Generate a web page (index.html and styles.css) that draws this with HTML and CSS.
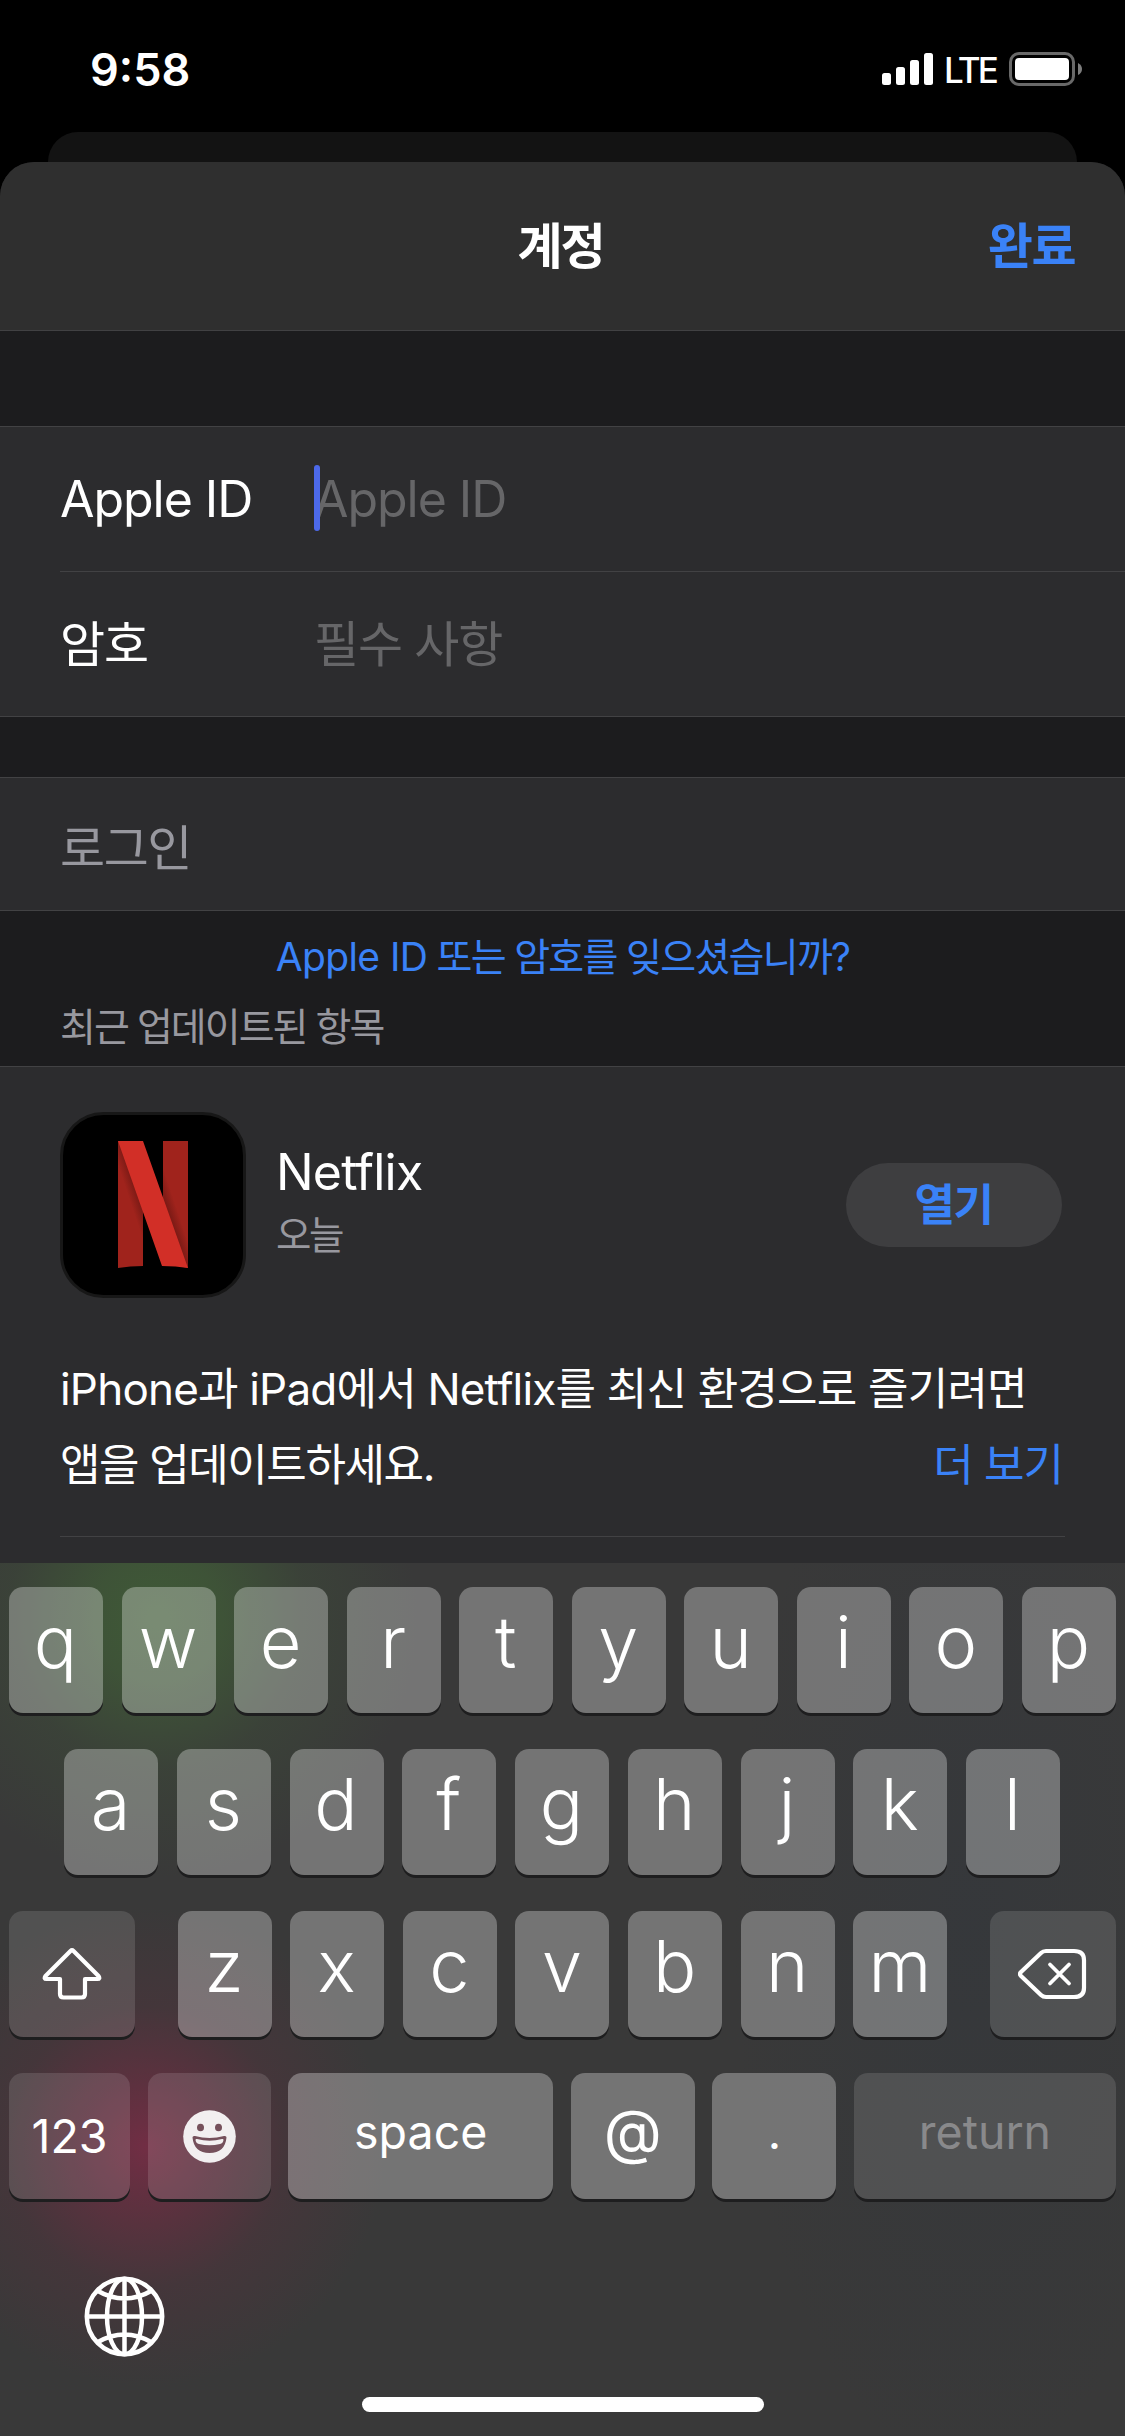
FILE: index.html
```html
<!DOCTYPE html>
<html lang="ko">
<head>
<meta charset="utf-8">
<title>계정</title>
<link rel="stylesheet" href="styles.css">
</head>
<body>
<div class="screen">
  <header class="status">
    <span class="clock">9:58</span>
    <div class="indicators">
      <svg class="signal" width="51" height="32" viewBox="0 0 51 32" fill="#fff"><rect x="0" y="20" width="9" height="12" rx="2.5"/><rect x="14" y="14" width="9" height="18" rx="2.5"/><rect x="28" y="7" width="9" height="25" rx="2.5"/><rect x="42" y="0" width="9" height="32" rx="2.5"/></svg>
      <span class="lte">LTE</span>
      <svg class="battery" width="73" height="34" viewBox="0 0 73 34"><rect x="1.5" y="1.5" width="63" height="31" rx="8.5" fill="none" stroke="#696969" stroke-width="3"/><rect x="6" y="6" width="54" height="22" rx="4" fill="#fff"/><path d="M69 11q4 2 4 6t-4 6z" fill="#7d7d7d"/></svg>
    </div>
  </header>
  <div class="back-card"></div>
  <main class="sheet">
    <div class="nav"><h1 class="title">계정</h1><span class="done">완료</span></div>
    <section class="group credentials">
      <div class="row first"><span class="label">Apple ID</span><span class="field focused">Apple ID</span></div>
      <div class="row ko"><span class="label">암호</span><span class="field">필수 사항</span></div>
    </section>
    <section class="group login">로그인</section>
    <div class="between">
      <a class="forgot"><span class="latin">Apple ID</span> 또는 암호를 잊으셨습니까?</a>
      <h2 class="recent">최근 업데이트된 항목</h2>
    </div>
    <section class="updates">
      <div class="app">
        <svg class="app-icon" width="186" height="186" viewBox="0 0 186 186">
          <defs>
            <linearGradient id="foldLeft" gradientUnits="userSpaceOnUse" x1="77" y1="80" x2="68" y2="83"><stop offset="0" stop-color="#7a1a15"/><stop offset="1" stop-color="#a0231c"/></linearGradient>
            <linearGradient id="foldRight" gradientUnits="userSpaceOnUse" x1="109" y1="103" x2="118" y2="100"><stop offset="0" stop-color="#7a1a15"/><stop offset="1" stop-color="#a0231c"/></linearGradient>
          </defs>
          <rect x="1.5" y="1.5" width="183" height="183" rx="42" fill="#000" stroke="#171717" stroke-width="3"/>
          <path d="M58 29h25v125q-13 0-25 2z" fill="url(#foldLeft)"/>
          <path d="M103 29h25v127l-25-5z" fill="url(#foldRight)"/>
          <path d="M58 29h25l45 127q-12-2-26-2z" fill="#d22f27"/>
        </svg>
        <div class="app-text"><span class="app-name">Netflix</span><span class="app-date">오늘</span></div>
        <span class="open">열기</span>
      </div>
      <div class="notes">
        <p class="line">iPhone과 iPad에서 Netflix를 최신 환경으로 즐기려면</p>
        <div class="second"><p>앱을 업데이트하세요.</p><span class="more">더 보기</span></div>
      </div>
    </section>
  </main>
  <section class="keyboard">
    <div class="keys"><span class="key">q</span><span class="key">w</span><span class="key">e</span><span class="key">r</span><span class="key">t</span><span class="key">y</span><span class="key">u</span><span class="key">i</span><span class="key">o</span><span class="key">p</span></div>
    <div class="keys middle"><span class="key">a</span><span class="key">s</span><span class="key">d</span><span class="key">f</span><span class="key">g</span><span class="key">h</span><span class="key">j</span><span class="key">k</span><span class="key">l</span></div>
    <div class="keys">
      <span class="key dark wide"><svg width="60" height="54" viewBox="0 0 60 54"><path d="M28.500 4Q30 2.500 31.500 4L56.500 29q2 3-1 3H43v15q0 3.500-3.500 3.500h-18q-3.500 0-3.500-3.500V32H4.500q-3 0-1-3z" fill="none" stroke="#fff" stroke-width="4.200" stroke-linejoin="round"/></svg></span>
      <div class="keys inner"><span class="key">z</span><span class="key">x</span><span class="key">c</span><span class="key">v</span><span class="key">b</span><span class="key">n</span><span class="key">m</span></div>
      <span class="key dark wide"><svg width="70" height="52" viewBox="0 0 70 52" fill="none" stroke="#fff" stroke-width="4.200" stroke-linecap="round" stroke-linejoin="round"><path d="M28 3h28q10 0 10 9v28q0 9-10 9H28q-3 0-5-2L3 28q-2-2 0-4L23 5q2-2 5-2z"/><path d="M32 16.500l19 19M51 16.500l-19 19" stroke-width="3.800"/></svg></span>
    </div>
    <div class="keys bottom">
      <span class="key dark num">123</span>
      <span class="key dark emoji"><svg width="53" height="53" viewBox="0 0 53 53"><circle cx="26.500" cy="26.500" r="26.300" fill="#f2eff0"/><g fill="#75505b"><ellipse cx="17.500" cy="17.500" rx="3.500" ry="3.800"/><ellipse cx="35.500" cy="17.500" rx="3.500" ry="3.800"/><path d="M9.500 27.500q0-2 2.500-1.500 14.500 4 29 0 2.500-.5 2.500 1.500-1.500 15.500-17 15.500T9.500 27.500z"/></g><path d="M12.500 30q0-1.500 1.500-1 12.500 3.500 25 0 1.500-.5 1.500 1-.5 3.500-3.500 4-10.500 2.500-21 0-3-.5-3.500-4z" fill="#f2eff0"/></svg></span>
      <span class="key space">space</span><span class="key at">@</span><span class="key dot">.</span><span class="key dark return">return</span>
    </div>
    <svg class="globe" width="81" height="81" viewBox="0 0 81 81" fill="none" stroke="#fff" stroke-width="4.500"><circle cx="40.500" cy="40.500" r="37.700"/><ellipse cx="40.500" cy="40.500" rx="17.500" ry="37.700"/><path d="M40.500 2.500v76M2.500 40.500h76M13 14.500q27.500 16 55 0M13 66.500q27.500-16 55 0"/></svg>
    <div class="home"></div>
  </section>
</div>
</body>
</html>
```
FILE: styles.css
```css
* { box-sizing: border-box; }
body { margin: 0; background: #000; }
h1, h2, p { margin: 0; font-weight: 400; }
.screen {
  width: 1125px; height: 2436px; overflow: hidden;
  display: flex; flex-direction: column;
  background: #000; color: #fff;
  font-family: Inter, "Noto Sans CJK KR", sans-serif;
  white-space: nowrap;
}

.status { height: 132px; flex: none; display: flex; justify-content: space-between; padding: 52px 43px 0 90px; }
.clock { font-size: 45px; line-height: 35px; font-weight: 600; }
.indicators { display: flex; align-items: flex-start; }
.signal { margin-top: 1px; }
.lte { width: 76px; padding-left: 11px; font-size: 35px; line-height: 37px; font-weight: 500; letter-spacing: -2.800px; }

.back-card { height: 60px; flex: none; margin: 0 48px -30px; border-radius: 30px 30px 0 0; background: #131313; }
.sheet {
  height: 1401px; flex: none; position: relative; overflow: hidden;
  border-radius: 34px 34px 0 0; background: #1c1c1e;
}
.nav {
  height: 169px; display: grid; grid-template-columns: 1fr auto 1fr; align-items: center;
  padding: 0 49px 8px; background: #2f2f2f; border-bottom: 1px solid #414143;
}
.title, .done { font-size: 49px; font-weight: 600; letter-spacing: -2px; }
.title { grid-column: 2; margin: 0 2px 0 -2px; }
.done { justify-self: end; margin-right: 1px; letter-spacing: -1.500px; color: #3a82f7; }

.group { background: #2c2c2e; border: solid #424244; border-width: 1px 0; }
.credentials { height: 291px; margin-top: 95px; }
.row { height: 145px; margin-left: 60px; display: flex; align-items: center; font-size: 50px; letter-spacing: -1.050px; }
.row.first { border-bottom: 1px solid #424244; }
.row.ko { font-size: 49px; letter-spacing: -1.200px; padding-bottom: 9px; }
.label { width: 254px; }
.field { color: #666668; }
.focused { position: relative; }
.focused::before { content: ""; position: absolute; left: 0; top: -4px; width: 6px; height: 66px; border-radius: 3px; background: #4c69ea; }
.login { height: 134px; margin-top: 60px; padding-left: 60px; font-size: 49px; line-height: 141px; letter-spacing: -1.400px; color: #98989f; }
.between { height: 155px; padding: 15px 60px 0; }
.forgot { display: block; text-align: center; font-size: 39px; line-height: 61px; letter-spacing: -1.700px; color: #3a82f7; }
.latin { letter-spacing: -.600px; }
.recent { margin-top: 9px; font-size: 39px; line-height: 61px; letter-spacing: -1.950px; color: #98989f; }

.updates { height: 497px; background: #2c2c2e; border-top: 1px solid #424244; }
.app { height: 276px; padding: 0 63px 0 60px; display: flex; align-items: center; }
.app-text { display: flex; flex-direction: column; margin-left: 30px; flex: 1; }
.app-name { margin-top: -3px; padding-bottom: 3px; font-size: 50px; line-height: 60px; letter-spacing: -.800px; }
.app-date { font-size: 38.500px; line-height: 60px; letter-spacing: -2.500px; color: #98989f; }
.open { width: 216px; height: 84px; border-radius: 42px; background: #3e3e40; color: #3a82f7; font-size: 44px; line-height: 84px; font-weight: 700; letter-spacing: -1.500px; padding-right: 1px; text-align: center; }
.notes { height: 194px; margin: 0 60px; border-bottom: 1px solid #424244; font-size: 44px; line-height: 76px; padding-top: 8px; letter-spacing: -1.400px; }
.line { letter-spacing: -.800px; }
.second { display: flex; justify-content: space-between; }
.more { margin-right: 2px; letter-spacing: -1px; color: #3a82f7; }

.keyboard {
  height: 873px; flex: none; padding: 24px 9px 0;
  display: flex; flex-direction: column; gap: 36px;
  background:
    radial-gradient(circle at 158px 55px, rgba(66, 106, 54, .68) 0, rgba(66, 104, 54, .55) 65px, rgba(65, 100, 54, .2) 150px, transparent 260px),
    radial-gradient(circle at 146px 584px, rgba(132, 42, 72, .75) 0, rgba(124, 42, 68, .52) 65px, rgba(112, 42, 64, .2) 140px, transparent 240px),
    radial-gradient(ellipse 240px 560px at 970px 360px, rgba(48, 54, 62, .4), transparent),
    #393939;
}
.keys { display: flex; justify-content: space-between; height: 126px; flex: none; }
.middle { padding: 0 56px 0 55px; }
.inner { width: 770px; }
.key {
  width: 94px; height: 126px; border-radius: 14px;
  background: rgba(255, 255, 255, .3); box-shadow: 0 3px 0 #1e1e1f;
  display: flex; align-items: center; justify-content: center;
  font-size: 72px; font-weight: 350; line-height: 1; padding: 0 1px 16px 0;
}
.dark { background: rgba(255, 255, 255, .125); padding: 0; }
.wide { width: 126px; }
.bottom .key { font-size: 46.500px; font-weight: 400; }
.bottom .num { width: 121px; }
.bottom .emoji { width: 123px; }
.bottom .space { width: 265px; padding: 0 0 8px; }
.bottom .at { width: 124px; font-size: 60px; padding: 0 0 10px; }
.bottom .dot { width: 124px; padding: 0 0 8px; }
.bottom .return { width: 262px; color: #89898b; padding-bottom: 8px; }
.globe { margin: 41px 0 0 74.500px; flex: none; }
.home { width: 402px; height: 15px; border-radius: 8px; background: #fff; margin: 4px auto 0; flex: none; }
```
